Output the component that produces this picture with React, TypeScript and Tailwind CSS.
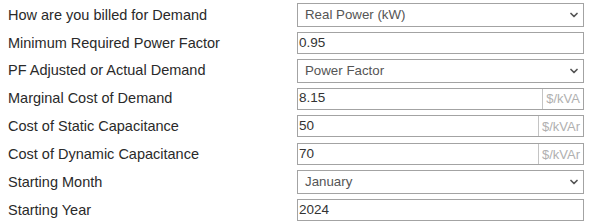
import React from "react";

const Chevron = () => (
  <svg width="8" height="6" viewBox="0 0 8 6" className="text-[#555]">
    <path d="M1 1.5 L4 4.5 L7 1.5" fill="none" stroke="currentColor" strokeWidth="1.7" strokeLinecap="round" strokeLinejoin="round" />
  </svg>
);

type Row =
  | { label: string; kind: "select"; value: string }
  | { label: string; kind: "input"; value: string; addon?: string };

const rows: Row[] = [
  { label: "How are you billed for Demand", kind: "select", value: "Real Power (kW)" },
  { label: "Minimum Required Power Factor", kind: "input", value: "0.95" },
  { label: "PF Adjusted or Actual Demand", kind: "select", value: "Power Factor" },
  { label: "Marginal Cost of Demand", kind: "input", value: "8.15", addon: "$/kVA" },
  { label: "Cost of Static Capacitance", kind: "input", value: "50", addon: "$/kVAr" },
  { label: "Cost of Dynamic Capacitance", kind: "input", value: "70", addon: "$/kVAr" },
  { label: "Starting Month", kind: "select", value: "January" },
  { label: "Starting Year", kind: "input", value: "2024" },
];

export default function App() {
  return (
    <div
      className="w-[591px] h-[224px] bg-white pt-[1px] flex flex-col"
      style={{ fontFamily: '"Liberation Sans", Arial, sans-serif' }}
    >
      {rows.map((r) => (
        <div key={r.label} className="h-[28px] flex items-center">
          <div className="w-[297px] pl-[8px] text-[14.5px] text-[#2a2a2a] leading-none">{r.label}</div>
          {r.kind === "select" ? (
            <div className="w-[287px] h-[24px] border border-[#a3a3a3] flex items-center justify-between pl-[7px] pr-[5px] text-[13.3px] text-[#555]">
              <span>{r.value}</span>
              <Chevron />
            </div>
          ) : (
            <div className="w-[287px] h-[22px] border border-[#a3a3a3] flex items-center text-[13.5px] text-[#333]">
              <span className="flex-1 pl-[1px]">{r.value}</span>
              {r.addon && (
                <span className="h-full border-l border-[#c4c4c4] flex items-center px-[3px] text-[13px] text-[#b0b0b0]">
                  {r.addon}
                </span>
              )}
            </div>
          )}
        </div>
      ))}
    </div>
  );
}
